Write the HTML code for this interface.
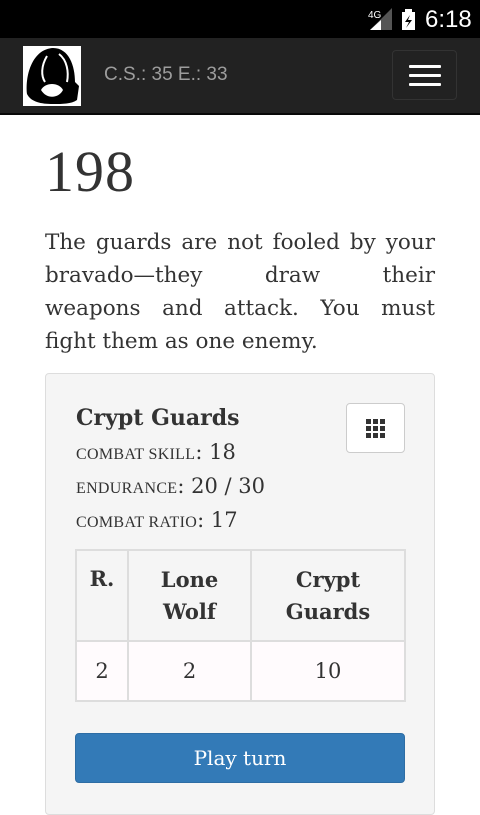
<!DOCTYPE html>
<html><head><style>
body{margin:0;width:480px;height:800px;overflow:hidden;background:#fff;font-family:"DejaVu Serif","Liberation Serif",serif;color:#333}
.sb{height:38px;background:#000;position:relative;color:#fff;font-family:"Liberation Sans",sans-serif}
.nav{height:75px;background:#222;border-bottom:2px solid #080808;position:relative}
.logo{position:absolute;left:23px;top:8px;width:58px;height:60px;background:#fff;overflow:hidden}
.cs{position:absolute;left:104px;top:26px;color:#9d9d9d;font:19px "Liberation Sans",sans-serif}
.hb{position:absolute;left:392px;top:12px;width:63px;height:48px;border:1px solid #333;border-radius:4px}
.hb i{position:absolute;left:16px;width:32px;height:3px;background:#fff;border-radius:1px}
h1{position:absolute;left:45px;top:138px;margin:0;font-weight:normal;font-size:58px;font-family:"Liberation Serif",serif;letter-spacing:1px}
p{position:absolute;left:45px;top:226px;width:390px;margin:0;font-size:21.5px;line-height:33px}
p span{display:block;text-align:justify;text-align-last:justify;white-space:nowrap}
p span.l{text-align-last:left}
.panel{position:absolute;left:45px;top:373px;width:388px;height:440px;background:#f5f5f5;border:1px solid #ddd;border-radius:4px}
.t{position:absolute;left:30px;font-size:21px;white-space:nowrap}
.sc{text-transform:uppercase;font-size:16px;font-family:"Liberation Serif",serif;letter-spacing:0.3px}
.gb{position:absolute;left:300px;top:29px;width:57px;height:48px;background:#fff;border:1px solid #ccc;border-radius:4px}
table{position:absolute;left:29px;top:175px;width:331px;border-collapse:collapse;font-size:21px;table-layout:fixed}
td,th{border:2px solid #ddd;text-align:center;padding:0}
th{height:89px;line-height:32px}
td{height:58px;background:#fffbfd;font-weight:normal}
.btn{position:absolute;left:29px;top:359px;width:328px;height:48px;background:#337ab7;border:1px solid #2e6da4;border-radius:4px;color:#fff;font-size:20px;text-align:center;line-height:48px}
</style></head><body>
<div class="sb">
<svg style="position:absolute;left:368px;top:8px" width="60" height="24"><text x="0" y="10" font-size="10" fill="#fff" font-family="Liberation Sans">4G</text><polygon points="2,22 24,22 24,0" fill="#555"/><polygon points="2,22 13,22 13,12" fill="#fff"/><rect x="34" y="4" width="13" height="18" fill="#fff"/><rect x="37" y="1" width="7" height="3" fill="#fff"/><polygon points="42,7 37,14 41,14 38,20 44,12 40,12" fill="#000"/></svg>
<span style="position:absolute;left:425px;top:6px;font-size:24px">6:18</span></div>
<div class="nav">
<div class="logo"><svg width="58" height="60"><path d="M4 48 C2 28 10 3 30 2 C46 2 52 20 52 36 L56 40 L54 54 C48 58 40 58 30 58 C18 58 8 56 4 48Z" fill="#000"/><path d="M18 44 C22 36 36 36 40 44 C36 52 24 54 18 44Z" fill="#fff"/><path d="M24 10 C18 20 18 30 22 36" stroke="#fff" stroke-width="2" fill="none"/><path d="M36 8 C44 14 46 26 44 36" stroke="#fff" stroke-width="2" fill="none"/></svg></div>
<div class="cs">C.S.: 35 E.: 33</div>
<div class="hb"><i style="top:14px"></i><i style="top:23px"></i><i style="top:32px"></i></div>
</div>
<h1>198</h1>
<p><span>The guards are not fooled by your</span><span>bravado—they draw their</span><span>weapons and attack. You must</span><span class="l">fight them as one enemy.</span></p>
<div class="panel">
<div class="t" style="top:31px;font-weight:bold;font-size:22px">Crypt Guards</div>
<div class="t" style="top:66px"><span class="sc">Combat Skill</span>: 18</div>
<div class="t" style="top:100px"><span class="sc">Endurance</span>: 20 / 30</div>
<div class="t" style="top:134px"><span class="sc">Combat Ratio</span>: 17</div>
<div class="gb"><svg width="57" height="48"><g fill="#333"><rect x="19" y="15" width="5" height="5"/><rect x="26" y="15" width="5" height="5"/><rect x="33" y="15" width="5" height="5"/><rect x="19" y="22" width="5" height="5"/><rect x="26" y="22" width="5" height="5"/><rect x="33" y="22" width="5" height="5"/><rect x="19" y="29" width="5" height="5"/><rect x="26" y="29" width="5" height="5"/><rect x="33" y="29" width="5" height="5"/></g></svg></div>
<table><colgroup><col style="width:52px"><col style="width:123px"><col></colgroup>
<tr><th style="vertical-align:top;padding-top:12px;height:77px">R.</th><th>Lone<br>Wolf</th><th>Crypt<br>Guards</th></tr>
<tr><td>2</td><td>2</td><td>10</td></tr></table>
<div class="btn">Play turn</div>
</div>
</body></html>
